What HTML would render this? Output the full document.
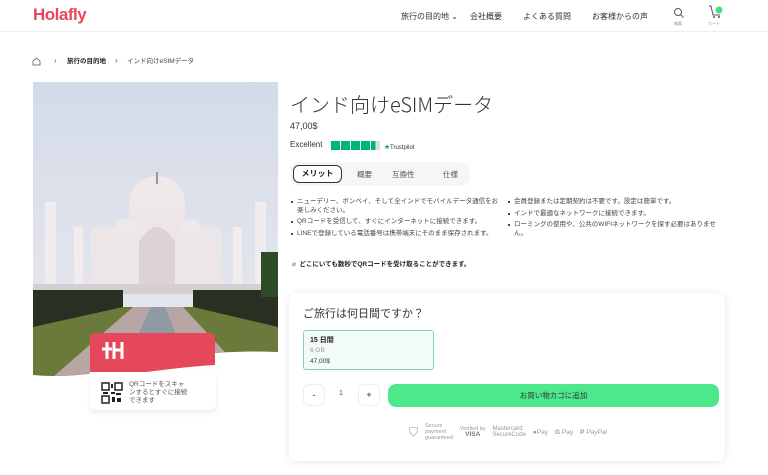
<!DOCTYPE html>
<html><head><meta charset="utf-8"><style>
*{margin:0;padding:0;box-sizing:border-box}
body{width:768px;height:475px;overflow:hidden;background:#fff;font-family:"Liberation Sans","Noto Sans CJK JP",sans-serif;color:#222;position:relative}
.a{position:absolute}
.hdr{left:0;top:0;width:768px;height:32px;border-bottom:1px solid #eee}
.nav{font-size:8px;color:#333;top:11px}
ul{list-style:none}
li{position:relative;padding-left:7px;font-size:6.5px;line-height:8.5px;color:#444;margin-bottom:3px}
li:before{content:"";position:absolute;left:1px;top:3px;width:2px;height:2px;background:#444}
</style></head><body>
<div class="a hdr"></div>
<div class="a" style="left:33px;top:5px;font-size:17px;color:#e5485b;font-weight:bold;letter-spacing:-0.5px">Holafly</div>
<div class="a nav" style="left:401px">旅行の目的地 ⌄</div>
<div class="a nav" style="left:470px">会社概要</div>
<div class="a nav" style="left:523px">よくある質問</div>
<div class="a nav" style="left:592px">お客様からの声</div>
<svg class="a" style="left:673px;top:7px" width="12" height="12" viewBox="0 0 12 12"><circle cx="5" cy="5" r="3.5" fill="none" stroke="#555" stroke-width="1"/><path d="M7.5 7.5L10.5 10.5" stroke="#555"/></svg>
<div class="a" style="left:674px;top:21px;font-size:4px;color:#888">検索</div>
<svg class="a" style="left:708px;top:5px" width="16" height="14" viewBox="0 0 16 14"><path d="M1 1h2l2 9h7" fill="none" stroke="#555"/><circle cx="11" cy="5" r="3.5" fill="#4ade80"/><circle cx="6" cy="12" r="1" fill="#555"/><circle cx="11" cy="12" r="1" fill="#555"/></svg>
<div class="a" style="left:708px;top:21px;font-size:4px;color:#888">カート</div>
<svg class="a" style="left:32px;top:57px" width="9" height="9" viewBox="0 0 9 9"><path d="M1 4L4.5 1L8 4V8H1Z" fill="none" stroke="#555" stroke-width=".8"/></svg>
<div class="a" style="left:54px;top:56px;font-size:8px;color:#555;line-height:10px">›</div>
<div class="a" style="left:67px;top:57px;font-size:6.5px;color:#222;font-weight:bold;line-height:10px">旅行の目的地</div>
<div class="a" style="left:115px;top:56px;font-size:8px;color:#555;line-height:10px">›</div>
<div class="a" style="left:127px;top:57px;font-size:6.5px;color:#444;line-height:10px">インド向けeSIMデータ</div>

<svg class="a" style="left:33px;top:82px" width="245" height="295" viewBox="0 0 245 295">
<defs><linearGradient id="sk" x1="0" y1="0" x2="0" y2="1"><stop offset="0" stop-color="#d3dbe9"/><stop offset="1" stop-color="#ebe9ee"/></linearGradient><clipPath id="cp"><path d="M0 0H245V270C200 268 150 272 110 282C70 292 30 296 0 293Z"/></clipPath></defs>
<g clip-path="url(#cp)">
<rect width="245" height="295" fill="url(#sk)"/>
<rect x="58" y="145" width="130" height="60" fill="#ece6e8"/>
<ellipse cx="124" cy="120" rx="28" ry="26" fill="#efe9ea"/>
<rect x="96" y="125" width="56" height="22" fill="#ece6e8"/>
<rect x="123" y="90" width="2" height="12" fill="#999"/>
<path d="M106 205V160Q115 145 124 145Q133 145 142 160V205Z" fill="#ddd3d6"/>
<ellipse cx="92" cy="145" rx="10" ry="8" fill="#eee8ea"/><ellipse cx="157" cy="145" rx="10" ry="8" fill="#eee8ea"/>
<rect x="12" y="120" width="11" height="85" fill="#f1ecee"/><rect x="222" y="120" width="11" height="85" fill="#f1ecee"/>
<rect x="41" y="145" width="9" height="60" fill="#f1ecee"/><rect x="200" y="145" width="9" height="60" fill="#f1ecee"/>
<rect x="0" y="202" width="245" height="10" fill="#d6cfd2"/>
<rect x="0" y="208" width="90" height="45" fill="#283022"/><rect x="160" y="208" width="85" height="45" fill="#283022"/>
<rect x="228" y="170" width="17" height="45" fill="#2f4a26"/>
<path d="M0 245L90 225H160L245 245V295H0Z" fill="#6a7a3a"/>
<path d="M20 295L100 225H150L215 295Z" fill="#b8a6a4"/>
<path d="M85 295L118 225H132L160 295Z" fill="#8e9aa4"/>
</g></svg>
<svg class="a" style="left:90px;top:333px" width="126" height="46" viewBox="0 0 126 46"><path d="M4 0H120a5 5 0 0 1 5 5V32C90 34 50 40 0 46V4a4 4 0 0 1 4-4Z" fill="#e5485b"/><path d="M12 16H22M17 9V26M24 9V26M24 17H32M32 9V26" stroke="#fff" stroke-width="3" fill="none"/></svg>
<div class="a" style="left:90px;top:372px;width:126px;height:38px;background:#fff;border-radius:0 0 6px 6px;box-shadow:0 3px 6px rgba(0,0,0,.08)"></div>
<svg class="a" style="left:101px;top:382px" width="22" height="22" viewBox="0 0 22 22"><rect width="22" height="22" fill="#fff"/><rect x="1" y="1" width="7" height="7" fill="none" stroke="#222" stroke-width="1.5"/><rect x="14" y="1" width="7" height="7" fill="none" stroke="#222" stroke-width="1.5"/><rect x="1" y="14" width="7" height="7" fill="none" stroke="#222" stroke-width="1.5"/><path d="M10 2h2v4h-2zM10 10h4v2h-4zM15 11h5v2h-5zM11 15h3v5h-3zM16 16h4v4h-4zM2 10h5v2H2z" fill="#222"/></svg>
<div class="a" style="left:129px;top:381px;font-size:6.5px;line-height:8px;color:#555;width:85px">QRコードをスキャ<br>ンするとすぐに接続<br>できます</div>

<div class="a" style="left:290px;top:92px;font-size:20px;color:#333;font-family:'Noto Sans CJK JP','Liberation Sans',sans-serif;font-weight:300;line-height:24px">インド向けeSIMデータ</div>
<div class="a" style="left:290px;top:121px;font-size:9px;color:#333">47,00$</div>
<div class="a" style="left:290px;top:140px;font-size:8px;color:#333">Excellent</div>
<div class="a" style="left:331px;top:141px;display:flex;gap:1px"><i style="width:9px;height:9px;background:#00b67a"></i><i style="width:9px;height:9px;background:#00b67a"></i><i style="width:9px;height:9px;background:#00b67a"></i><i style="width:9px;height:9px;background:#00b67a"></i><i style="width:9px;height:9px;background:linear-gradient(90deg,#00b67a 50%,#ddd 50%)"></i></div>
<div class="a" style="left:384px;top:142px;font-size:6px;color:#333"><span style="color:#00b67a">★</span>Trustpilot</div>
<div class="a" style="left:290px;top:162px;width:180px;height:24px;border-radius:9px;background:#f6f6f6"></div>
<div class="a" style="left:293px;top:165px;width:49px;height:18px;border:1px solid #333;border-radius:6px;background:#fff;font-size:8px;text-align:center;line-height:16px;font-weight:bold">メリット</div>
<div class="a" style="left:357px;top:169px;font-size:7.5px;color:#555">概要</div>
<div class="a" style="left:392px;top:169px;font-size:7.5px;color:#555">互換性</div>
<div class="a" style="left:443px;top:169px;font-size:7.5px;color:#555">仕様</div>
<ul class="a" style="left:290px;top:198px;width:210px">
<li>ニューデリー、ボンベイ、そして全インドでモバイルデータ通信をお楽しみください。</li>
<li>QRコードを受信して、すぐにインターネットに接続できます。</li>
<li>LINEで登録している電話番号は携帯端末にそのまま保存されます。</li></ul>
<ul class="a" style="left:507px;top:198px;width:210px">
<li>会員登録または定期契約は不要です。設定は簡単です。</li>
<li>インドで最適なネットワークに接続できます。</li>
<li>ローミングの使用や、公共のWIFIネットワークを探す必要はありません。</li></ul>
<div class="a" style="left:292px;top:258px;font-size:6.5px;color:#222;font-weight:bold"><span style="color:#999">⌀</span>&nbsp; どこにいても数秒でQRコードを受け取ることができます。</div>

<div class="a" style="left:289px;top:293px;width:436px;height:168px;border-radius:8px;background:#fff;box-shadow:0 1px 8px rgba(0,0,0,.1)"></div>
<div class="a" style="left:303px;top:305px;font-size:11px;color:#333">ご旅行は何日間ですか？</div>
<div class="a" style="left:303px;top:330px;width:131px;height:40px;border:1px solid #7fd9a5;border-radius:3px;background:#f2fbf6"></div>
<div class="a" style="left:310px;top:335px;font-size:7px;font-weight:bold">15 日間</div>
<div class="a" style="left:310px;top:347px;font-size:6.5px;color:#999">6 GB</div>
<div class="a" style="left:310px;top:358px;font-size:6.5px;color:#333">47,00$</div>
<div class="a" style="left:303px;top:384px;width:22px;height:22px;border:1px solid #eee;border-radius:6px;text-align:center;line-height:20px;font-size:9px">-</div>
<div class="a" style="left:339px;top:390px;font-size:7px;color:#555">1</div>
<div class="a" style="left:358px;top:384px;width:22px;height:22px;border:1px solid #eee;border-radius:6px;text-align:center;line-height:20px;font-size:9px">+</div>
<div class="a" style="left:388px;top:384px;width:331px;height:23px;border-radius:8px;background:#4ee88c;text-align:center;line-height:23px;font-size:7.5px;color:#333">お買い物カゴに追加</div>
<div class="a" style="left:409px;top:423px;font-size:5.5px;color:#999;display:flex;align-items:center;gap:7px;white-space:nowrap">
<span style="font-size:12px">⛉</span><span style="line-height:6px">Secure<br>payment<br>guaranteed</span><span style="line-height:6px;text-align:center">Verified by<br><b style="font-size:6.5px;color:#777">VISA</b></span><span style="line-height:6.5px;font-size:6px">Mastercard<br>SecureCode</span><span style="font-size:6.5px">●Pay</span><span style="font-size:6.5px"><b>G</b> Pay</span><span style="font-size:6.5px"><b>P</b> <i>PayPal</i></span></div>
</body></html>
